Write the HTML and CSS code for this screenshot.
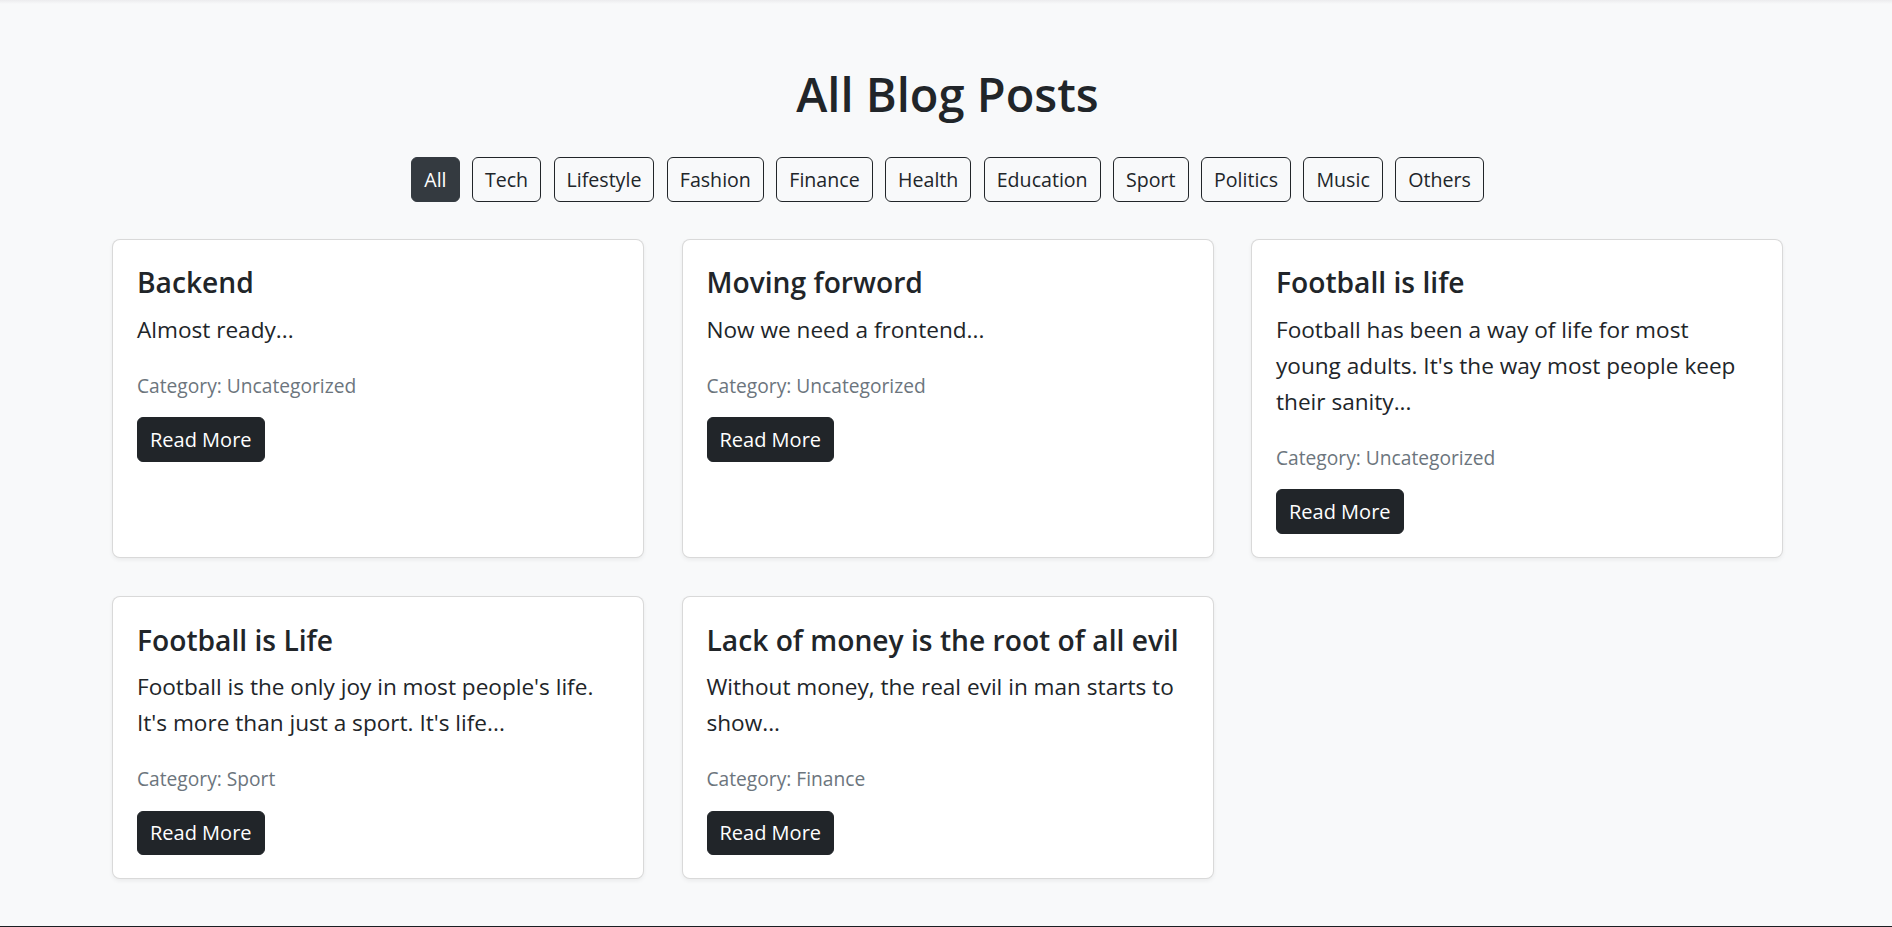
FILE: index.html
```html
<!DOCTYPE html>
<html lang="en">
<head>
<meta charset="utf-8">
<title>All Blog Posts</title>
<link rel="stylesheet" href="styles.css">
</head>
<body>
<div class="topshade"></div>
<main class="page">
  <h1 class="page-title">All Blog Posts</h1>
  <div class="filters">
    <button class="filter active">All</button>
    <button class="filter">Tech</button>
    <button class="filter">Lifestyle</button>
    <button class="filter">Fashion</button>
    <button class="filter">Finance</button>
    <button class="filter">Health</button>
    <button class="filter">Education</button>
    <button class="filter">Sport</button>
    <button class="filter">Politics</button>
    <button class="filter">Music</button>
    <button class="filter">Others</button>
  </div>
  <div class="grid">
    <article class="card">
      <h5 class="card-title">Backend</h5>
      <p class="card-text">Almost ready...</p>
      <p class="card-cat">Category: Uncategorized</p>
      <a class="btn-dark" href="#">Read More</a>
    </article>
    <article class="card">
      <h5 class="card-title">Moving forword</h5>
      <p class="card-text">Now we need a frontend...</p>
      <p class="card-cat">Category: Uncategorized</p>
      <a class="btn-dark" href="#">Read More</a>
    </article>
    <article class="card">
      <h5 class="card-title">Football is life</h5>
      <p class="card-text">Football has been a way of life for most young adults. It's the way most people keep their sanity...</p>
      <p class="card-cat">Category: Uncategorized</p>
      <a class="btn-dark" href="#">Read More</a>
    </article>
    <article class="card">
      <h5 class="card-title">Football is Life</h5>
      <p class="card-text">Football is the only joy in most people's life. It's more than just a sport. It's life...</p>
      <p class="card-cat">Category: Sport</p>
      <a class="btn-dark" href="#">Read More</a>
    </article>
    <article class="card">
      <h5 class="card-title">Lack of money is the root of all evil</h5>
      <p class="card-text">Without money, the real evil in man starts to show...</p>
      <p class="card-cat">Category: Finance</p>
      <a class="btn-dark" href="#">Read More</a>
    </article>
  </div>
</main>
<footer class="footer"></footer>
</body>
</html>
```

FILE: styles.css
```css
* { box-sizing: border-box; }
html, body { margin: 0; padding: 0; }
body {
  background: #f8f9fa;
  color: #212529;
  font-family: "Open Sans", Lato, sans-serif;
}
.topshade {
  height: 4px;
  margin-bottom: -4px;
  background: linear-gradient(#ececee, #f8f9fa);
}
.page {
  padding: 65.5px 109px 47px 112px;
}
.page-title {
  margin: 0;
  text-align: center;
  font-size: 47px;
  line-height: 56px;
  font-weight: 600;
}
.filters {
  margin-top: 35.8px;
  display: flex;
  justify-content: center;
  gap: 12.4px;
}
.filter {
  font-family: inherit;
  font-size: 19.6px;
  line-height: 30.4px;
  padding: 6.5px 12px 5.5px;
  border: 1px solid #212529;
  border-radius: 6px;
  background: transparent;
  color: #212529;
}
.filter.active {
  background: #343a40;
  border-color: #343a40;
  color: #fff;
}
.grid {
  margin-top: 37px;
  display: grid;
  grid-template-columns: repeat(3, 532px);
  column-gap: 37.5px;
  row-gap: 38px;
}
.card {
  background: #fff;
  border: 1px solid rgba(0,0,0,.15);
  border-radius: 8px;
  box-shadow: 0 2px 4px rgba(0,0,0,.06);
  padding: 24px 24px 23.2px 24px;
}
.card-title {
  margin: 2.5px 0 0;
  font-size: 28.2px;
  line-height: 32px;
  font-weight: 600;
}
.card-text {
  margin: 13.5px 0 0;
  font-size: 22.6px;
  line-height: 36px;
}
.card-cat {
  margin: 24.3px 0 0;
  font-size: 19.2px;
  line-height: 28px;
  color: #6c757d;
}
.btn-dark {
  display: inline-block;
  margin-top: 17.45px;
  font-size: 20px;
  line-height: 30.4px;
  padding: 6.5px 12px 5.5px;
  border: 1px solid #212529;
  border-radius: 6px;
  background: #212529;
  color: #fff;
  text-decoration: none;
}
.footer {
  height: 60px;
  background: #1c1f23;
}
```
